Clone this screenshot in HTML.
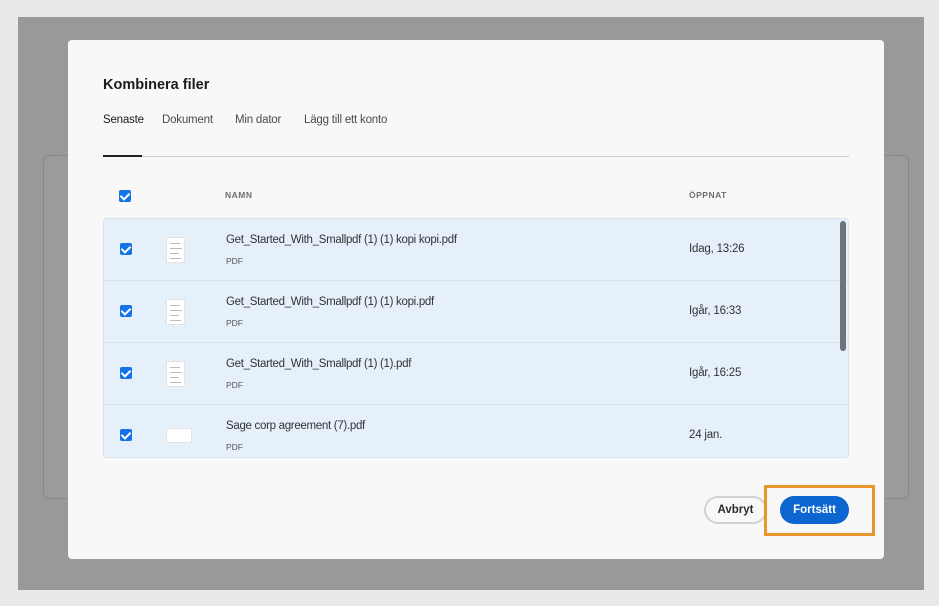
<!DOCTYPE html>
<html><head><style>
*{box-sizing:border-box;margin:0;padding:0}
body{width:939px;height:606px;background:#e9e9e9;font-family:"Liberation Sans",sans-serif;position:relative;overflow:hidden;color:#2c2c2c}
.ov{position:absolute;left:18px;top:17px;width:906px;height:573px;background:#999}
.bg{position:absolute;left:43px;top:155px;width:866px;height:344px;border:1px solid #888;border-radius:6px;background:#9b9b9b}
.m{position:absolute;left:68px;top:40px;width:816px;height:519px;background:#f8f8f8;border-radius:4px}
.t{position:absolute;left:35px;top:37px;font-size:14.5px;font-weight:bold;color:#1b1b1b}
.tabs{position:absolute;left:35px;top:74px;font-size:11.5px;color:#4b4b4b;letter-spacing:-.2px}
.tabs span{position:absolute;white-space:nowrap}
.tl{position:absolute;left:35px;top:116px;width:746px;height:1px;background:#ccc}
.ta{position:absolute;left:35px;top:115px;width:39px;height:2px;background:#222}
.cb{position:absolute;width:12px;height:12px;background:#1473e6;border-radius:2px}
.cb:after{content:"";position:absolute;left:3px;top:1px;width:4px;height:7px;border:solid #fff;border-width:0 2px 2px 0;transform:rotate(45deg)}
.hd{position:absolute;top:150px;font-size:8.5px;font-weight:bold;color:#6e6e6e;letter-spacing:.5px}
.list{position:absolute;left:35px;top:178px;width:746px;height:240px;border:1px solid #dde3ea;border-radius:3px;background:#e6f0fb;overflow:hidden}
.row{position:absolute;left:0;width:746px;height:62px;border-bottom:1px solid #d7dfe9}
.row .cb{left:16px;top:24px}
.nm{position:absolute;left:122px;top:15px;font-size:11.5px;color:#333;letter-spacing:-.3px}
.ty{position:absolute;left:122px;top:37px;font-size:8.5px;color:#555}
.dt{position:absolute;left:585px;top:24px;font-size:11.5px;color:#333;letter-spacing:-.2px}
.ic{position:absolute;left:62px;top:18px;width:19px;height:26px;background:#fff;border:1px solid #e3e3e3}
.ic i{position:absolute;left:3px;height:1px;background:#bbb}
.sb{position:absolute;left:736px;top:2px;width:6px;height:130px;background:#6f7378;border-radius:3px}
.btn1{position:absolute;left:636px;top:456px;width:63px;height:28px;border:2px solid #d2d2d2;border-radius:14px;font-size:11.5px;font-weight:bold;text-align:center;line-height:24px;color:#2c2c2c;background:#f8f8f8}
.btn2{position:absolute;left:712px;top:456px;width:69px;height:28px;border-radius:14px;background:#0d66d0;color:#fff;font-size:11.5px;font-weight:bold;text-align:center;line-height:28px}
.hl{position:absolute;left:764px;top:485px;width:111px;height:51px;border:3px solid #e8962e}
</style></head><body>
<div class="ov"></div>
<div class="bg"></div>
<div class="m">
<div class="t">Kombinera filer</div>
<div class="tabs"><span style="left:0;color:#1b1b1b">Senaste</span><span style="left:59px">Dokument</span><span style="left:132px">Min dator</span><span style="left:201px">Lägg till ett konto</span></div>
<div class="tl"></div><div class="ta"></div>
<div class="cb" style="left:51px;top:150px"></div>
<div class="hd" style="left:157px">NAMN</div>
<div class="hd" style="left:621px">ÖPPNAT</div>
<div class="list">
<div class="row" style="top:0"><div class="cb"></div><div class="ic"><i style="top:5px;width:10px"></i><i style="top:10px;width:12px"></i><i style="top:15px;width:9px"></i><i style="top:20px;width:11px"></i></div><div class="nm">Get_Started_With_Smallpdf (1) (1) kopi kopi.pdf</div><div class="ty">PDF</div><div class="dt">Idag, 13:26</div></div>
<div class="row" style="top:62px"><div class="cb"></div><div class="ic"><i style="top:5px;width:10px"></i><i style="top:10px;width:12px"></i><i style="top:15px;width:9px"></i><i style="top:20px;width:11px"></i></div><div class="nm">Get_Started_With_Smallpdf (1) (1) kopi.pdf</div><div class="ty">PDF</div><div class="dt">Igår, 16:33</div></div>
<div class="row" style="top:124px"><div class="cb"></div><div class="ic"><i style="top:5px;width:10px"></i><i style="top:10px;width:12px"></i><i style="top:15px;width:9px"></i><i style="top:20px;width:11px"></i></div><div class="nm">Get_Started_With_Smallpdf (1) (1).pdf</div><div class="ty">PDF</div><div class="dt">Igår, 16:25</div></div>
<div class="row" style="top:186px;border:0"><div class="cb"></div><div class="ic" style="width:26px;height:15px;top:23px;left:62px"></div><div class="nm">Sage corp agreement (7).pdf</div><div class="ty">PDF</div><div class="dt">24 jan.</div></div>
<div class="sb"></div>
</div>
<div class="btn1">Avbryt</div>
<div class="btn2">Fortsätt</div>
</div>
<div class="hl"></div>
</body></html>
